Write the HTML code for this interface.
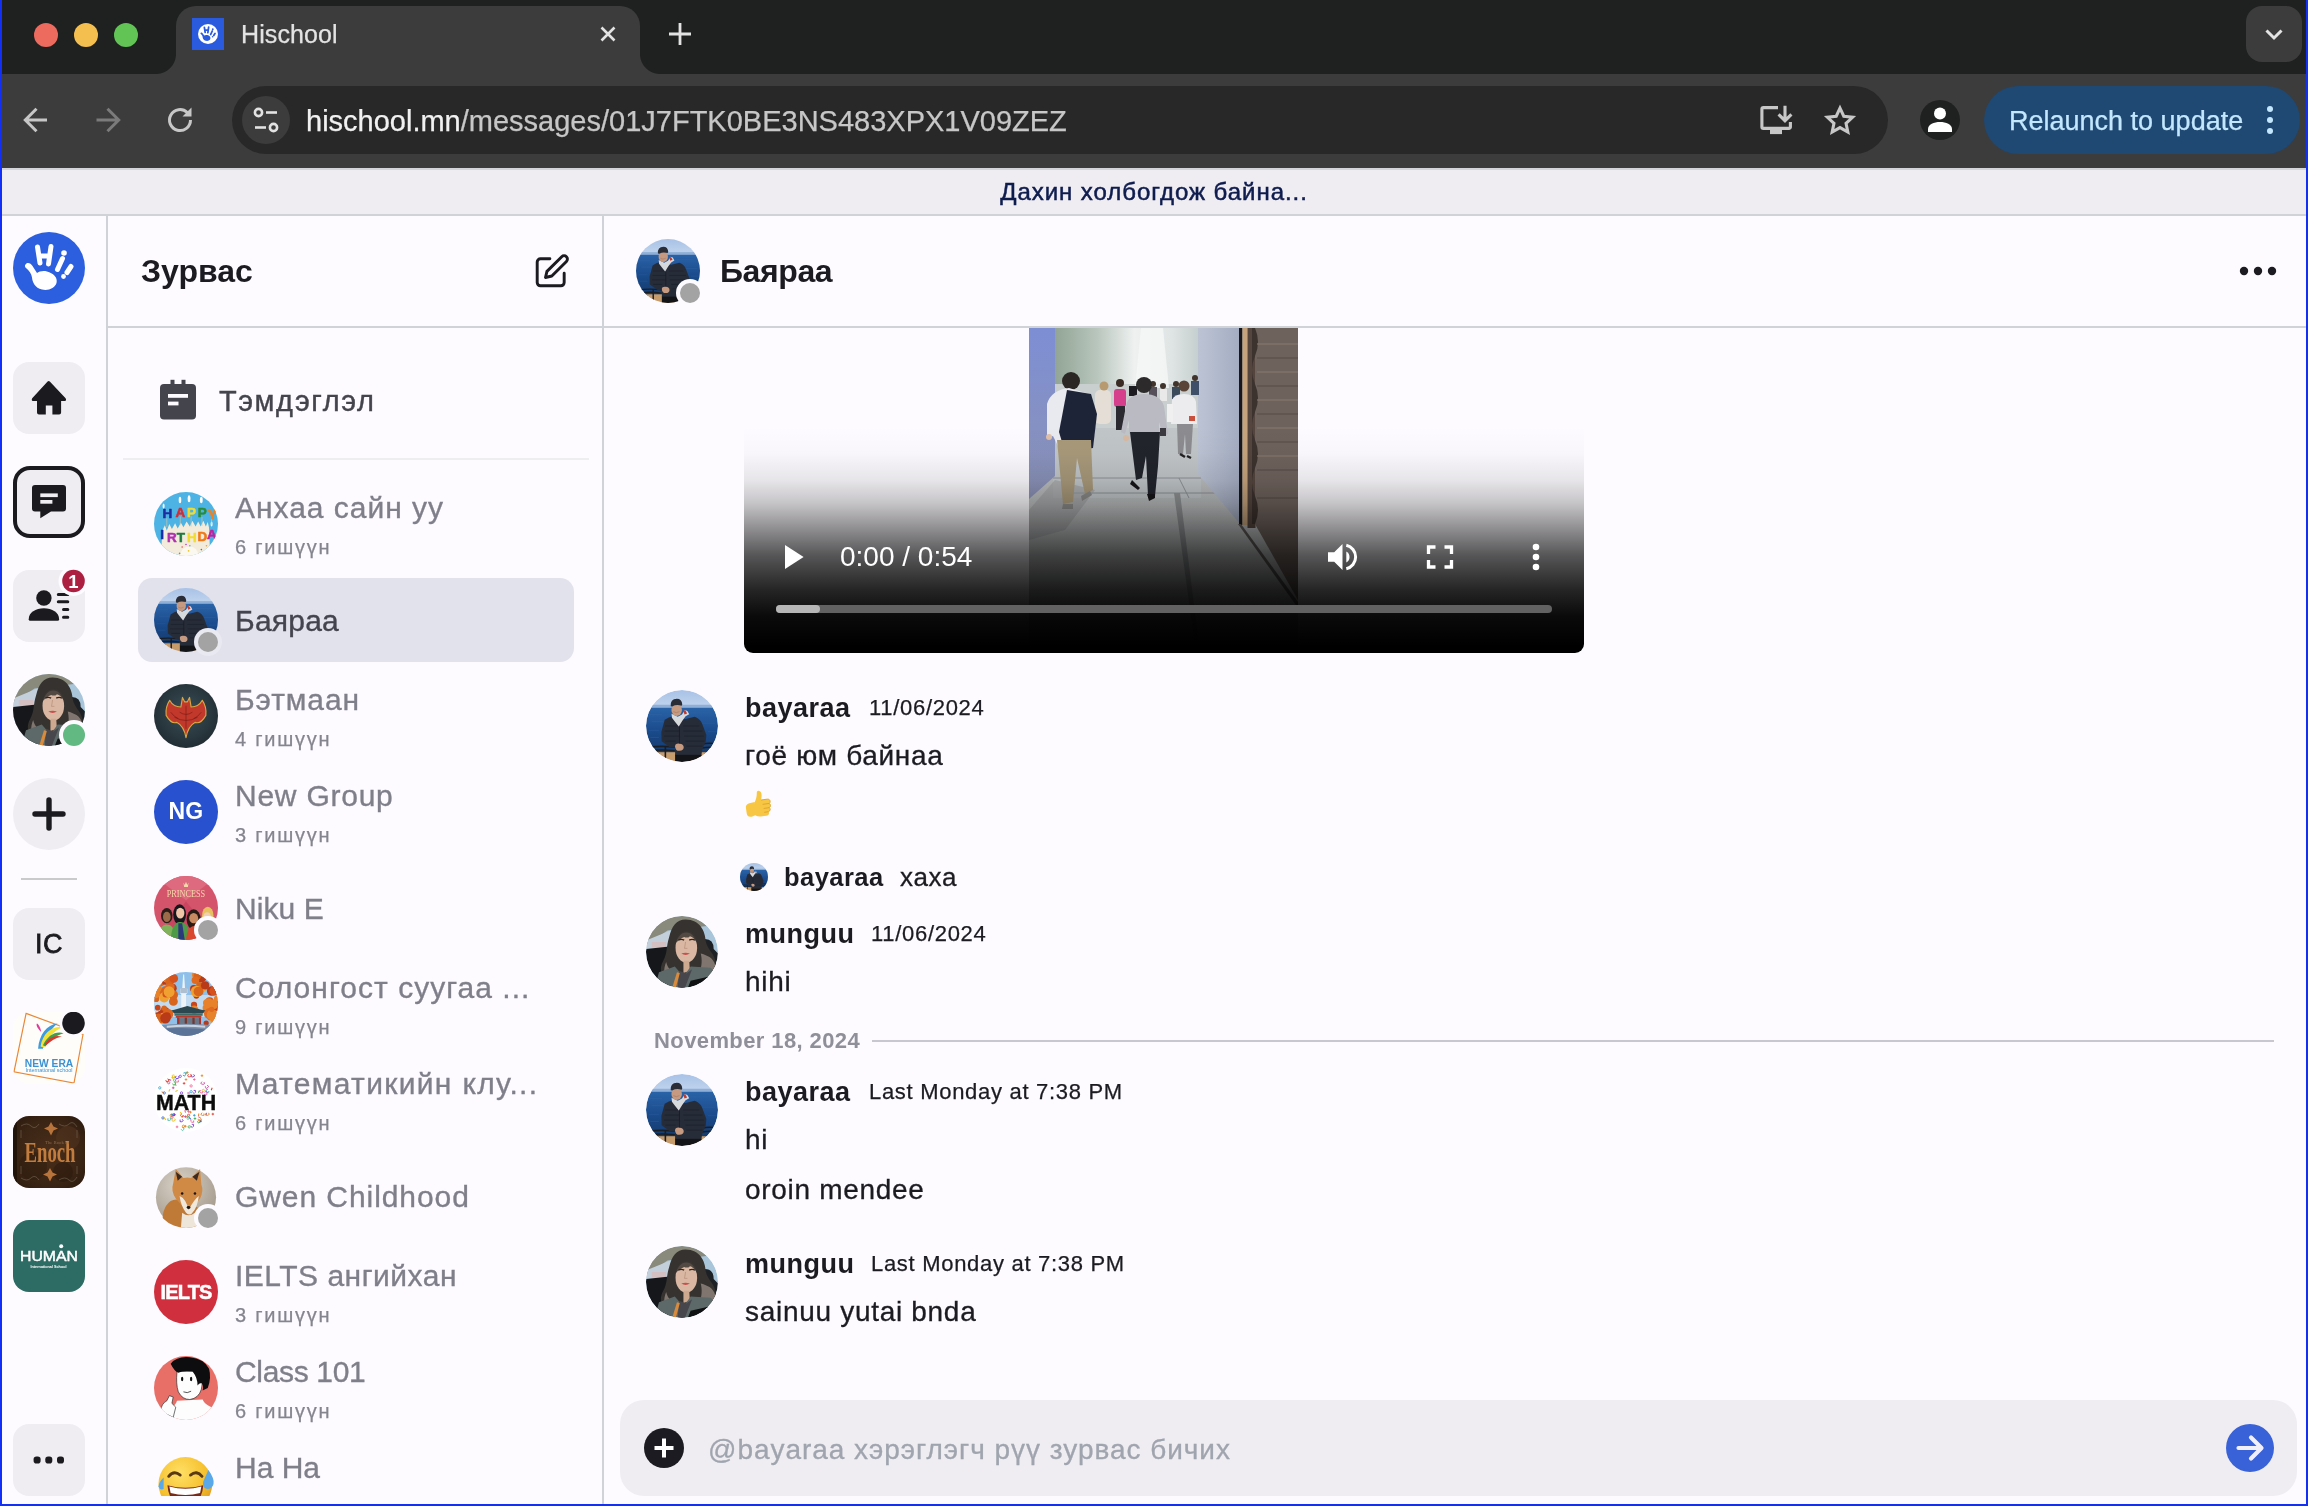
<!DOCTYPE html>
<html lang="mn">
<head>
<meta charset="utf-8">
<title>Hischool</title>
<style>
*{box-sizing:border-box;margin:0;padding:0}
html,body{width:2308px;height:1506px;overflow:hidden;background:#fdfbff}
body{will-change:transform;position:relative;font-family:"Liberation Sans",sans-serif;color:#1b1b21;-webkit-font-smoothing:antialiased}
.abs{position:absolute}
.t{position:absolute;white-space:nowrap;line-height:1}
/* window frame */
#frameL{left:0;top:0;width:2px;height:1506px;background:#1230f5;z-index:50}
#frameR{left:2306px;top:0;width:2px;height:1506px;background:#1230f5;z-index:50}
#frameB{left:0;top:1504px;width:2308px;height:2px;background:#1230f5;z-index:50}
/* browser chrome */
#tabstrip{left:0;top:0;width:2308px;height:74px;background:#1f2020}
#toolbar{left:0;top:74px;width:2308px;height:94px;background:#3c3c3c}
#tab{left:176px;top:6px;width:464px;height:68px;background:#3c3c3c;border-radius:20px 20px 0 0}
#tab:before,#tab:after{content:"";position:absolute;bottom:0;width:20px;height:20px}
#tab:before{left:-20px;background:radial-gradient(circle at 0 0,transparent 19.5px,#3c3c3c 20.5px)}
#tab:after{right:-20px;background:radial-gradient(circle at 100% 0,transparent 19.5px,#3c3c3c 20.5px)}
.tl{width:24px;height:24px;border-radius:50%;top:23px}
#omni{left:232px;top:86px;width:1656px;height:68px;border-radius:34px;background:#282828}
#siteinfo{left:242px;top:96px;width:48px;height:48px;border-radius:50%;background:#3c3c3c}
#relaunch{left:1984px;top:86px;width:316px;height:68px;border-radius:34px;background:#1f4872}
#tabsearch{left:2246px;top:6px;width:56px;height:56px;border-radius:16px;background:#3c3c3c}
#profile{left:1920px;top:100px;width:40px;height:40px;border-radius:50%;background:#1f2020}
/* app */
#line1{left:0;top:168px;width:2308px;height:2px;background:#d2d5da}
#banner{left:0;top:170px;width:2308px;height:44px;background:#efedf2}
#line2{left:0;top:214px;width:2308px;height:2px;background:#cfd3d8}
#vline1{left:106px;top:216px;width:2px;height:1290px;background:#cfd3d8}
#vline2{left:602px;top:216px;width:2px;height:1290px;background:#cfd3d8}
#hline{left:108px;top:326px;width:2200px;height:2px;background:#cfd3d8}
.rail{left:13px;width:72px;height:72px;border-radius:16px;background:#efedf2}
.circle{border-radius:50%}
.av{width:64px;height:64px;border-radius:50%;overflow:hidden;left:154px}
.nm{left:235px;font-size:30px;color:#7f7f8a;-webkit-text-stroke:.35px}
.sub{left:235px;font-size:20px;letter-spacing:1.750px;color:#85858f;-webkit-text-stroke:.25px}
.dot{width:28px;height:28px;border-radius:50%;background:#fdfbff}
.dot:after{content:"";position:absolute;left:4px;top:4px;width:20px;height:20px;border-radius:50%;background:#a3a3a3}
.mav{left:646px;width:72px;height:72px;border-radius:50%;overflow:hidden}
.un{left:745px;font-size:27px;font-weight:bold;color:#1b1b21;letter-spacing:.5px}
.ts{font-size:22px;color:#1b1b21;letter-spacing:.7px;-webkit-text-stroke:.25px}
.msg{left:745px;font-size:28px;color:#1b1b21;letter-spacing:.7px;-webkit-text-stroke:.3px}
</style>
</head>
<body>
<!-- BROWSER CHROME -->
<div id="tabstrip" class="abs"></div>
<div id="toolbar" class="abs"></div>
<div id="tab" class="abs"></div>
<div class="abs tl" style="left:34px;background:#ed6a5f"></div>
<div class="abs tl" style="left:74px;background:#f5bf4f"></div>
<div class="abs tl" style="left:114px;background:#61c455"></div>
<div id="omni" class="abs"></div>
<div id="siteinfo" class="abs"></div>
<div id="relaunch" class="abs"></div>
<div id="tabsearch" class="abs"></div>
<div id="profile" class="abs"></div>
<svg class="abs" style="left:0;top:0" width="2308" height="168" viewBox="0 0 2308 168" fill="none">
<!-- favicon -->
<rect x="192" y="18" width="32" height="32" fill="#2a5bdf"/>
<circle cx="208" cy="34" r="10" fill="#fff"/>
<g transform="translate(196.600 22.600) scale(.317)" fill="#2a5bdf"><path d="M12.500 32.500c2-2.500 5-1.500 7 1.500l4.500 7c2-1.500 6-2.500 10-1.500 6 1.500 11 6 9.500 11.500-1.500 5-8 8-14.500 6.500-7-1.500-9.500-7-10-12-0.500-4-3-7-6-9.500-1.200-1-1.400-2.400-0.500-3.500z"/>
<g stroke="#2a5bdf" stroke-width="5.600" stroke-linecap="round" fill="none"><path d="M24.500 15l2.500 16M38 14.500l-2.500 17.500M26 24h10.500M49.500 26.500l-5 11M58 34.500l-4 6"/></g><circle cx="51" cy="21" r="3"/><circle cx="50.500" cy="44.500" r="2.600"/></g>
<!-- tab close -->
<path d="M601.5 27.5l13 13M614.5 27.5l-13 13" stroke="#e3e3e3" stroke-width="2.6"/>
<!-- new tab plus -->
<path d="M669 34h22M680 23v22" stroke="#e3e3e3" stroke-width="2.8"/>
<!-- tab search chevron -->
<path d="M2266.500 30.500l7.500 7.500l7.500-7.500" stroke="#e3e3e3" stroke-width="3"/>
<!-- back -->
<path d="M47 120H26M36.500 108.800L25.300 120l11.200 11.200" stroke="#c7c7c7" stroke-width="3"/>
<!-- forward -->
<path d="M96.500 120h21M107.500 108.800L118.700 120l-11.200 11.200" stroke="#7b7b7b" stroke-width="3"/>
<!-- reload -->
<path d="M190.500 120a10.500 10.500 0 1 1-3.200-7.500" stroke="#c7c7c7" stroke-width="3"/>
<path d="M191.500 107.500v9h-9z" fill="#c7c7c7"/>
<!-- site info (tune) -->
<g stroke="#e3e3e3" stroke-width="2.6"><circle cx="258.500" cy="112.500" r="3.600"/><path d="M266 112.500h11"/><circle cx="273.500" cy="127.500" r="3.600"/><path d="M255 127.500h11"/></g>
<!-- install icon -->
<g stroke="#c7c7c7" stroke-width="3.100"><path d="M1778 107.600H1763.400a1.500 1.500 0 0 0-1.500 1.500V126.900a1.500 1.500 0 0 0 1.500 1.500H1788.900a1.500 1.500 0 0 0 1.500-1.500V122"/><path d="M1785 105.800V120M1778.600 114.300l6.400 6.400 6.400-6.400"/></g><rect x="1770" y="129.500" width="12" height="4.600" fill="#c7c7c7"/>
<!-- star -->
<path d="M1840 106.300l4.200 9 9.800 1.100-7.300 6.700 2 9.700-8.700-4.900-8.700 4.900 2-9.700-7.300-6.700 9.800-1.100z" stroke="#c7c7c7" stroke-width="3.400" stroke-linejoin="miter" transform="translate(1840 120.500) scale(.9) translate(-1840 -120)"/>
<!-- profile -->
<circle cx="1940" cy="113.500" r="6" fill="#fff"/><path d="M1928 132v-3c0-4.500 6-7 12-7s12 2.500 12 7v3z" fill="#fff"/>
<!-- kebab -->
<g fill="#c2e7ff"><circle cx="2270" cy="109" r="3"/><circle cx="2270" cy="120" r="3"/><circle cx="2270" cy="131" r="3"/></g>
</svg>
<div class="t" style="left:241px;top:22px;font-size:25px;letter-spacing:.1px;color:#e3e3e3;-webkit-text-stroke:.25px">Hischool</div>
<div class="t" style="left:306px;top:107px;font-size:29px;color:#c7c7c7;-webkit-text-stroke:.25px"><span style="color:#f1f1f1">hischool.mn</span>/messages/01J7FTK0BE3NS483XPX1V09ZEZ</div>
<div class="t" style="left:2009px;top:108px;font-size:27px;color:#c2e7ff;-webkit-text-stroke:.25px">Relaunch to update</div>


<!-- APP FRAME -->
<div id="line1" class="abs"></div>
<div id="banner" class="abs"></div>
<div id="line2" class="abs"></div>
<div class="t" style="left:0;width:2308px;text-align:center;top:180px;font-size:24px;letter-spacing:.96px;color:#0e1c4e;-webkit-text-stroke:.5px #0e1c4e">Дахин холбогдож байна...</div>
<div id="vline1" class="abs"></div>
<div id="vline2" class="abs"></div>
<div id="hline" class="abs"></div>
<svg width="0" height="0" style="position:absolute">
<defs>
<clipPath id="cc"><circle cx="50" cy="50" r="50"/></clipPath>
<linearGradient id="sea" x1="0" y1="0" x2="0" y2="1"><stop offset="0" stop-color="#2a63a8"/><stop offset=".5" stop-color="#1a4b8c"/><stop offset="1" stop-color="#143a6c"/></linearGradient>
<linearGradient id="sky" x1="0" y1="0" x2="0" y2="1"><stop offset="0" stop-color="#a8c2e6"/><stop offset="1" stop-color="#c3d6ee"/></linearGradient>
<symbol id="bay" viewBox="0 0 100 100"><g clip-path="url(#cc)">
<rect width="100" height="26" fill="url(#sky)"/><rect y="20.500" width="100" height="4.500" fill="#90afd6"/>
<rect y="24.700" width="100" height="64" fill="url(#sea)"/>
<g stroke="#3a6aa8" stroke-width=".8" opacity=".5"><path d="M2 34h20M60 32h30M8 44h16M70 46h26M4 56h14M86 58h12M6 66h12"/></g>
<rect y="86.400" width="100" height="14" fill="#c79c6c"/>
<path d="M4 79.500q18-2.500 36 0M4 84.500q18-2.500 36 0M78 75q10-2 22 0M78 80.500q10-2 22 0" stroke="#1a1e24" stroke-width="2.200" fill="none"/><rect x="25.800" y="79" width="2.200" height="18" fill="#1a1e24"/>
<path d="M26 41.300q6-4 11-5l18 4 12.700-3.300q8 3 10.300 10l5.800 15.500-.8 9-5.100 12.300-.9 7H40.400v-11l-6.800 0-11.900-8.600-.4-12.700z" fill="#272c39"/>
<path d="M35.500 33l.5 5.500 4.500 6 5 6.100 5-8 4.500-6 5-3-2.500-4.500-3.500-1.400-4 6.300-6 3z" fill="#d7dadd"/><path d="M52 29.500l2.500-1.800 2.600 4.800-3.600 1.500z" fill="#c4372b"/>
<ellipse cx="42.600" cy="27.800" rx="7.300" ry="8.200" fill="#c59a80"/><path d="M38 30q4 3 8.500 0" stroke="#a87860" stroke-width=".9" fill="none"/>
<path d="M34.300 22.500q-.8-10.500 8.500-10.500 7 0 7.600 8.200l-1 1.800q-7-2.500-13 1z" fill="#2b2d36"/>
<path d="M46.500 51v28" stroke="#161922" stroke-width="1"/><path d="M40.400 78q0-4 6-3.500 6 .5 6 5t-6 5q-6 0-6-6.500z" fill="#c59a80"/>
<rect x="40.400" y="90" width="36.600" height="11" fill="#121418"/>
<g stroke="#1a1e29" stroke-width="1.100" opacity=".8"><path d="M27 50h17M26 57h20M25 64h22M27 71h14M52 50h22M52 57h26M53 64h27M55 71h26M56 78h22"/></g>
</g></symbol>
<symbol id="mun" viewBox="0 0 100 100"><g clip-path="url(#cc)">
<rect width="100" height="100" fill="#a9c5d9"/><path d="M0 0h100v12L30 20 0 40z" fill="#8a8a7c"/><path d="M0 34l34-14v30L0 52z" fill="#c3d0dc"/><rect x="8" y="36" width="20" height="8" fill="#d8bcbc" opacity=".8"/>
<path d="M0 46l36-4v60H0z" fill="#15171a"/><path d="M82 32q12 0 12 14l6 6v20H80z" fill="#1d2024"/>
<path d="M55 5c20 0 27 16 28 30 2 12 14 18 14 32 0 12-12 14-26 12L30 86c-10-2-12-14-6-24 6-10 4-20 8-32C36 14 42 5 55 5z" fill="#35322f"/>
<path d="M76 52c8 2 18 6 20 16 0 10-10 12-22 10 4-8 4-18 2-26zM28 64c2 10 10 16 22 20l-18 4c-8-4-8-14-4-24z" fill="#80766f"/>
<ellipse cx="56" cy="44" rx="15" ry="21" fill="#d9b7a2"/><path d="M41 38c2-12 8-17 15-17s14 4 15 16c-4-6-8-9-10-9-3 3-6 2-8 1-4 2-8 4-12 9z" fill="#3b3633" opacity=".85"/><path d="M52 62l8 0 1 14-9 3z" fill="#cfa890"/>
<path d="M49 52q6-2 12 0-6 4-12 0z" fill="#c8504e"/><path d="M45 33.500q4-2 8 0M60 33.500q4-2 8 0" stroke="#2a2422" stroke-width="2" fill="none"/><path d="M55 36l-1.500 9h4" stroke="#b8907a" stroke-width="1" fill="none"/>
<path d="M12 100l6-22 22-8 12 14 10-14 28 2 12 12v20z" fill="#5d6969"/><path d="M46 76l10 4 8-6-10 26H44z" fill="#46464c"/><path d="M43 78l4 1-6 22h-5z" fill="#d98a3a"/>
<path d="M58 100l4-10 26-6-6 16z" fill="#0f1113"/>
</g></symbol>
</defs></svg>
<!-- logo -->
<svg class="abs" style="left:13px;top:232px" width="72" height="72" viewBox="0 0 72 72"><circle cx="36" cy="36" r="36" fill="#2b5fe0"/>
<g fill="#fff"><path d="M12.500 32.500c2-2.500 5-1.500 7 1.500l4.500 7c2-1.500 6-2.500 10-1.500 6 1.500 11 6 9.500 11.500-1.500 5-8 8-14.500 6.500-7-1.500-9.500-7-10-12-0.500-4-3-7-6-9.500-1.200-1-1.400-2.400-0.500-3.500z"/>
<g stroke="#fff" stroke-width="5" stroke-linecap="round" fill="none"><path d="M24.500 15l2.500 16M38 14.500l-2.500 17.500M26 24h10.500M49.500 26.500l-5 11M58 34.500l-4 6"/></g>
<circle cx="51" cy="21" r="2.800"/><circle cx="50.500" cy="44.500" r="2.400"/></g></svg>
<!-- home -->
<div class="abs rail" style="top:362px"></div>
<svg class="abs" style="left:13px;top:362px" width="72" height="72" viewBox="13 362 72 72"><path d="M47.600 381.600q1.100-1.100 2.200 0L65.600 398.200q1.400 2.800-1.400 2.800H61.100V412.600q0 2-2 2H52.400V405.400H45.800V414.600H39q-2 0-2-2V401H33.600q-2.800 0-1.400-2.800z" fill="#1b1b1f"/></svg>
<!-- chat (active) -->
<div class="abs rail" style="top:466px;border:4.500px solid #1b1b1f;border-radius:17px"></div>
<svg class="abs" style="left:13px;top:466px" width="72" height="72" viewBox="13 466 72 72"><path d="M35 485H63a3 3 0 0 1 3 3V508.600a3 3 0 0 1-3 3H51L40.300 518.300V511.600H35a3 3 0 0 1-3-3V488a3 3 0 0 1 3-3z" fill="#1b1b1f"/><rect x="40.300" y="493.400" width="17.500" height="3.700" fill="#efedf2"/><rect x="40.300" y="500" width="12.100" height="3.700" fill="#efedf2"/></svg>
<!-- contacts -->
<div class="abs rail" style="top:570px"></div>
<svg class="abs" style="left:13px;top:566px" width="76" height="76" viewBox="13 566 76 76"><circle cx="43.900" cy="598" r="7.700" fill="#1b1b1f"/><path d="M28.700 619.300c0-7 7-11 15.200-11s15.200 4 15.200 11a1.500 1.500 0 0 1-1.500 1.500H30.200a1.500 1.500 0 0 1-1.500-1.500z" fill="#1b1b1f"/>
<g stroke="#1b1b1f" stroke-width="3" stroke-linecap="round"><path d="M58.300 594.500h9.500M58.300 601.800h9.500M63.500 609.400h4.300M63.500 617.200h4.300"/></g>
<circle cx="73.500" cy="581" r="15" fill="#fdfbff"/><circle cx="73.500" cy="581" r="11.300" fill="#ad1f40"/>
<text x="73.500" y="587.600" text-anchor="middle" font-family="Liberation Sans, sans-serif" font-weight="bold" font-size="18.500" fill="#fff">1</text></svg>
<!-- me -->
<svg class="abs" style="left:13px;top:674px" width="72" height="72"><use href="#mun" width="72" height="72"/></svg>
<div class="abs circle" style="left:58.500px;top:719.500px;width:30px;height:30px;background:#fdfbff"></div>
<div class="abs circle" style="left:62.500px;top:723.500px;width:22.500px;height:22.500px;background:#62b982"></div>
<!-- plus -->
<div class="abs rail circle" style="top:778px"></div>
<svg class="abs" style="left:13px;top:778px" width="72" height="72" viewBox="0 0 72 72"><path d="M22 36h28M36 22v28" stroke="#1b1b1f" stroke-width="5.400" stroke-linecap="round"/></svg>
<div class="abs" style="left:21px;top:878px;width:56px;height:2px;background:#cacacd"></div>
<!-- IC -->
<div class="abs rail" style="top:908px"></div>
<div class="t" style="left:13px;width:72px;text-align:center;top:931px;font-size:27px;-webkit-text-stroke:.8px #1b1b1f;letter-spacing:.5px">IC</div>
<!-- New Era -->
<svg class="abs" style="left:13px;top:1012px" width="76" height="72" viewBox="13 1012 76 72"><rect x="13" y="1012" width="72" height="72" rx="16" fill="#fffdfa"/>
<clipPath id="nec"><rect x="13" y="1012" width="72" height="72" rx="16"/></clipPath><path clip-path="url(#nec)" d="M26.100 1013.400L83 1034.500 74 1083 14 1071.800z" fill="none" stroke="#e8883a" stroke-width="1.200"/>
<g transform="translate(-9.500 -214) scale(1.220 1.205)"><path d="M39 1048c1-12 7-20 16-21-6 5-10 12-12 21z" fill="#3d9be0"/><path d="M41 1046c2-11 9-17 18-16-7 3-12 9-15 17z" fill="#f2e23a"/><path d="M43 1045c4-8 10-12 17-10-7 2-11 6-15 11z" fill="#3f9f4a"/><path d="M44.500 1044c4-6 9-8 14-6-6 1-9 4-13 7z" fill="#d9382c"/><path d="M38 1027c1 0 3 3 3.500 7-2-2-4.500-5-3.500-7z" fill="#e03a9a"/></g>
<text x="49" y="1066.700" text-anchor="middle" font-family="Liberation Sans, sans-serif" font-weight="bold" font-size="10.200" fill="#3a92d2" textLength="48.500" lengthAdjust="spacingAndGlyphs">NEW ERA</text>
<text x="49" y="1072" text-anchor="middle" font-family="Liberation Sans, sans-serif" font-size="4.800" fill="#3a92d2" textLength="47" lengthAdjust="spacingAndGlyphs">International school</text>
<circle cx="73.500" cy="1023" r="14" fill="#fdfbff"/><circle cx="73.500" cy="1023" r="11.300" fill="#1b1b1f"/></svg>
<!-- Enoch -->
<svg class="abs" style="left:13px;top:1116px" width="72" height="72" viewBox="0 0 72 72"><defs><radialGradient id="lea" cx=".5" cy=".5" r=".75"><stop offset="0" stop-color="#4a2f1b"/><stop offset=".6" stop-color="#3a2414"/><stop offset="1" stop-color="#27170c"/></radialGradient></defs>
<clipPath id="enc"><rect width="72" height="72" rx="16"/></clipPath><rect width="72" height="72" rx="16" fill="url(#lea)"/><g clip-path="url(#enc)"><rect x="0" y="0" width="4" height="72" fill="#23140a"/><circle cx="20" cy="50" r="14" fill="#2e1b0e" opacity=".5"/><circle cx="55" cy="22" r="12" fill="#573721" opacity=".45"/><circle cx="50" cy="56" r="10" fill="#2a180c" opacity=".5"/></g>
<g fill="none" stroke="#7a6a58" stroke-width=".8" opacity=".7"><path d="M8 10q6-4 10 0t8-2M46 8q6 4 10 0t8 3M8 62q6 4 10 0t8 2M46 64q6-4 10 0t8-3M8 14v8M64 14v8M8 50v8M64 50v8"/></g>
<g fill="#b8743a"><path d="M38 6l2.500 4.500 4.500 2-4.500 2-2.500 5-2.500-5-4.500-2 4.500-2zM37 52l2.500 4.500 4.500 2-4.500 2-2.500 5-2.500-5-4.500-2 4.500-2z"/></g>
<text x="37" y="46" text-anchor="middle" font-family="Liberation Serif, serif" font-weight="bold" font-size="30" fill="#c27d3e" textLength="51" lengthAdjust="spacingAndGlyphs">Enoch</text><text x="44" y="27.500" text-anchor="middle" font-family="Liberation Serif, serif" font-size="5" fill="#8a6a4a" textLength="24" lengthAdjust="spacingAndGlyphs">The Book of</text></svg>
<!-- Human -->
<svg class="abs" style="left:13px;top:1220px" width="72" height="72" viewBox="13 1220 72 72"><rect x="13" y="1220" width="72" height="72" rx="16" fill="#2d6b65"/>
<text x="49" y="1261.300" text-anchor="middle" font-family="Liberation Sans, sans-serif" font-size="15.400" fill="#fff" stroke="#fff" stroke-width=".5" textLength="58" lengthAdjust="spacingAndGlyphs">HUMAN</text><circle cx="61.200" cy="1246.200" r="2" fill="#fff"/>
<text x="48.500" y="1268.200" text-anchor="middle" font-family="Liberation Sans, sans-serif" font-weight="bold" font-size="4.200" fill="#fff" textLength="36" lengthAdjust="spacingAndGlyphs">International School</text></svg>
<!-- more -->
<div class="abs rail" style="top:1424px"></div>
<svg class="abs" style="left:13px;top:1424px" width="72" height="72" viewBox="0 0 72 72"><g fill="#1b1b1f"><rect x="20.600" y="32.500" width="7" height="7" rx="2.800"/><rect x="32.300" y="32.500" width="7" height="7" rx="2.800"/><rect x="44" y="32.500" width="7" height="7" rx="2.800"/></g></svg>


<div class="t" style="left:141px;top:255px;font-size:32px;font-weight:bold;color:#1b1b21">Зурвас</div>
<svg class="abs" style="left:532px;top:252px" width="39" height="39" viewBox="0 0 24 24" fill="none" stroke="#1b1b21" stroke-width="1.800" stroke-linecap="round" stroke-linejoin="round"><path d="M11 4.200H5.200a2 2 0 0 0-2 2V18.800a2 2 0 0 0 2 2H17.800a2 2 0 0 0 2-2V13"/><path d="M18.300 2.900a2 2 0 0 1 2.900 2.900L12.200 14.800 8.300 15.700 9.200 11.900z"/></svg>
<!-- notes -->
<svg class="abs" style="left:158px;top:378px" width="40" height="44" viewBox="158 378 40 44"><rect x="160" y="384" width="36" height="35.600" rx="4" fill="#44444d"/><rect x="170.500" y="379.800" width="4" height="7" fill="#44444d"/><rect x="181.500" y="379.800" width="4" height="7" fill="#44444d"/><rect x="168" y="394" width="20" height="3.800" fill="#fdfbff"/><rect x="168" y="401.600" width="10.500" height="3.800" fill="#fdfbff"/></svg>
<div class="t" style="left:219px;top:387px;font-size:29px;letter-spacing:1.550px;color:#44444d;-webkit-text-stroke:.4px">Тэмдэглэл</div>
<div class="abs" style="left:123px;top:458px;width:466px;height:2px;background:#eeeef1"></div>
<div class="abs" style="left:138px;top:578px;width:436px;height:84px;border-radius:14px;background:#e2e2ec"></div>
<svg class="abs" style="left:154px;top:492px" width="64" height="64" viewBox="0 0 100 100"><g clip-path="url(#cc)"><rect width="100" height="100" fill="#4db3e4"/>
<path d="M11 100l2-40 4-8 3 8 4-10 4 8 5-9 4 8 5-9 4 7 5-9 5 8 4-9 5 9 4-8 4 8 4-9 4 9 3-7 2 9 2 49z" fill="#f3ecdc"/><path d="M40 100q2-14 16-15 12 1 14 15z" fill="#fbf8f0"/>
<g fill="#fff"><ellipse cx="40.600" cy="12.500" rx="2" ry="5"/><ellipse cx="54.800" cy="10.500" rx="2.200" ry="5.500"/><ellipse cx="73.900" cy="12.500" rx="2.200" ry="5"/><ellipse cx="15" cy="22" rx="1.500" ry="4"/><ellipse cx="90" cy="50" rx="1.500" ry="4"/></g>
<g stroke="#d8c8a0" stroke-width="1"><path d="M20 41v14M41 38v14M58 38v16M75 39v14M90 41v10"/></g>
<g font-family="Liberation Sans, sans-serif" font-weight="bold" font-size="21" stroke-width=".9" stroke-linejoin="round" text-anchor="middle"><text x="21" y="41" fill="#1e2da0" stroke="#1e2da0">H</text><text x="41" y="38.500" fill="#d92a2f" stroke="#d92a2f">A</text><text x="58.500" y="38.500" fill="#f2dc30" stroke="#f2dc30">P</text><text x="75.500" y="39.500" fill="#2a8c3a" stroke="#2a8c3a">P</text><text x="91" y="41.500" fill="#f08020" stroke="#f08020">Y</text>
<text x="12.500" y="73.500" fill="#1a2aa8" stroke="#1a2aa8">I</text><text x="28" y="77.500" fill="#b030b0" stroke="#b030b0">R</text><text x="42" y="78.500" fill="#1e7a40" stroke="#1e7a40">T</text><text x="59" y="78.500" fill="#f2dc30" stroke="#f2dc30">H</text><text x="75.500" y="76.500" fill="#f07818" stroke="#f07818">D</text><text x="90.500" y="73.500" fill="#c020a0" stroke="#c020a0">A</text></g>
<g><circle cx="44" cy="86" r="1.300" fill="#e8555a"/><circle cx="50" cy="82" r="1.300" fill="#b040c0"/><circle cx="56" cy="84" r="1.300" fill="#4ab0e0"/><circle cx="54" cy="92" r="1.300" fill="#f0c020"/><circle cx="74" cy="90" r="1.300" fill="#4a70e0"/><circle cx="82" cy="84" r="1.300" fill="#f0a020"/><circle cx="40" cy="96" r="1.300" fill="#50b050"/></g></g></svg>
<div class="t nm" style="top:493px;letter-spacing:0.98px;color:#7f7f8a">Анхаа сайн уу</div>
<div class="t sub" style="top:537px">6 гишүүн</div>
<svg class="abs" style="left:154px;top:588px" width="64" height="64"><use href="#bay" width="64" height="64"/></svg><div class="abs dot" style="left:194px;top:628px;background:#e9e9f1"></div>
<div class="t nm" style="top:606px;letter-spacing:0.22px;color:#44444f">Баяраа</div>
<svg class="abs" style="left:154px;top:684px" width="64" height="64" viewBox="0 0 100 100"><defs><radialGradient id="btm" cx=".5" cy=".45" r=".6"><stop offset="0" stop-color="#3c5059"/><stop offset="1" stop-color="#1f2a30"/></radialGradient></defs><circle cx="50" cy="50" r="50" fill="url(#btm)"/>
<path d="M50 84C48 72 44 64 36 60C30 62 24 58 19 49C18 40 20 32 24.500 25.500C28 32 34 36 42 36L44.500 21L48 28L52 28L55.500 21L58 36C66 36 72 32 75.500 25.500C80 32 82 40 81 49C76 58 70 62 64 60C56 64 52 72 50 84Z" fill="#c2382b" stroke="#d6a545" stroke-width="1.800" stroke-linejoin="round"/><path d="M50 34v36M40 44q10 7 20 0M32 52q18 10 36 0M26 44q6 8 12 10M74 44q-6 8-12 10" stroke="#7e1c18" stroke-width="1.100" fill="none"/></svg>
<div class="t nm" style="top:685px;letter-spacing:0.91px;color:#7f7f8a">Бэтмаан</div>
<div class="t sub" style="top:729px">4 гишүүн</div>
<div class="abs circle" style="left:154px;top:780px;width:64px;height:64px;background:#2851d0"></div><div class="t" style="left:154px;width:64px;text-align:center;top:800px;font-size:23px;font-weight:bold;color:#fff;letter-spacing:.3px">NG</div>
<div class="t nm" style="top:781px;letter-spacing:0.76px;color:#7f7f8a">New Group</div>
<div class="t sub" style="top:825px">3 гишүүн</div>
<svg class="abs" style="left:154px;top:876px" width="64" height="64" viewBox="0 0 100 100"><g clip-path="url(#cc)"><rect width="100" height="100" fill="#d4546c"/><path d="M0 0L50 38 100 0z" fill="#dd6a7e"/><path d="M0 100L50 40 100 100z" fill="#c94560"/>
<text x="50" y="33" text-anchor="middle" font-family="Liberation Serif, serif" font-size="15" fill="#f3d9a8" textLength="60" lengthAdjust="spacingAndGlyphs">PRINCESS</text><path d="M46 10l2 4 2-5 2 5 2-4-1 7h-6z" fill="#f3d9a8"/>
<ellipse cx="20" cy="62" rx="9" ry="12" fill="#2a1c18"/><ellipse cx="20" cy="64" rx="6" ry="8" fill="#9c6a48"/><path d="M6 100q2-26 16-24 10 0 12 24z" fill="#7fb25a"/>
<ellipse cx="40" cy="60" rx="10" ry="16" fill="#16161c"/><ellipse cx="41" cy="58" rx="6.500" ry="8.500" fill="#efc7a8"/><path d="M26 100q2-30 16-28 14 2 14 28z" fill="#4f9a47"/><path d="M38 74l6 0 4 26h-10z" fill="#2a3a7a"/>
<ellipse cx="62" cy="68" rx="11" ry="16" fill="#2a1a14"/><ellipse cx="62" cy="66" rx="7" ry="8" fill="#c98a62"/><path d="M50 100q2-22 13-22t13 22z" fill="#d9482e"/>
<ellipse cx="84" cy="62" rx="9" ry="14" fill="#e8c060"/><ellipse cx="83" cy="64" rx="6" ry="7.500" fill="#f1cfb0"/><path d="M72 100q2-24 12-24t14 24z" fill="#b07ac0"/></g></svg><div class="abs dot" style="left:194px;top:916px"></div>
<div class="t nm" style="top:894px;letter-spacing:0.06px;color:#7f7f8a">Niku E</div>
<svg class="abs" style="left:154px;top:972px" width="64" height="64" viewBox="0 0 100 100"><g clip-path="url(#cc)"><rect width="100" height="100" fill="#8ec0ea"/><rect y="36" width="100" height="34" fill="#c2dbf0"/>
<path d="M45.500 4h1.600l1.400 22h3.500v7l-2 2v26h-7.400V35l-2-2v-7h3.500z" fill="#eef3f8"/><rect x="41" y="25" width="10.500" height="8" fill="#aebfd2"/>
<circle cx="10.4" cy="14.8" r="7.3" fill="#d9641c"/><circle cx="26.3" cy="11.1" r="6.9" fill="#b83a18"/><circle cx="6.9" cy="10.6" r="6.1" fill="#e8822a"/><circle cx="2.9" cy="32.6" r="8.1" fill="#d9641c"/><circle cx="30.3" cy="46.0" r="6.9" fill="#d9641c"/><circle cx="18.5" cy="30.8" r="8.9" fill="#d9641c"/><circle cx="17.8" cy="13.7" r="6.1" fill="#b83a18"/><circle cx="3.8" cy="25.1" r="8.1" fill="#e8822a"/><circle cx="3.3" cy="42.1" r="4.9" fill="#d9641c"/><circle cx="17.5" cy="9.1" r="4.3" fill="#e8822a"/><circle cx="15.9" cy="39.6" r="7.9" fill="#f0a030"/><circle cx="18.7" cy="34.5" r="5.5" fill="#d6521c"/><circle cx="5.8" cy="55.7" r="4.4" fill="#c8441a"/><circle cx="16.8" cy="61.9" r="7.6" fill="#c8441a"/><circle cx="19.5" cy="9.8" r="6.6" fill="#e8822a"/><circle cx="24.2" cy="14.9" r="6.4" fill="#d9641c"/><circle cx="30.8" cy="10.0" r="6.8" fill="#d6521c"/><circle cx="28.0" cy="25.4" r="7.5" fill="#b83a18"/><circle cx="15.9" cy="56.8" r="4.3" fill="#d9641c"/><circle cx="30.2" cy="35.8" r="7.3" fill="#d9641c"/><circle cx="23.4" cy="25.1" r="6.9" fill="#e06a20"/><circle cx="26.3" cy="23.5" r="5.9" fill="#e06a20"/><circle cx="11.1" cy="66.1" r="5.8" fill="#b83a18"/><circle cx="3.7" cy="8.8" r="7.8" fill="#e8822a"/><circle cx="23.6" cy="30.9" r="8.6" fill="#f0a030"/><circle cx="2.6" cy="34.2" r="6.7" fill="#e8822a"/><circle cx="93.1" cy="53.6" r="5.4" fill="#f0a030"/><circle cx="99.5" cy="42.3" r="5.9" fill="#e8822a"/><circle cx="67.7" cy="10.9" r="5.2" fill="#e8822a"/><circle cx="62.5" cy="51.5" r="4.9" fill="#c8441a"/><circle cx="62.2" cy="26.0" r="5.8" fill="#b83a18"/><circle cx="74.1" cy="7.8" r="8.3" fill="#b83a18"/><circle cx="86.9" cy="45.9" r="6.3" fill="#d6521c"/><circle cx="91.6" cy="54.2" r="8.0" fill="#f0a030"/><circle cx="77.1" cy="24.4" r="6.4" fill="#f0a030"/><circle cx="64.4" cy="4.2" r="5.0" fill="#e8822a"/><circle cx="66.2" cy="37.2" r="4.5" fill="#b83a18"/><circle cx="67.7" cy="6.3" r="5.8" fill="#d9641c"/><circle cx="64.7" cy="12.9" r="5.9" fill="#e06a20"/><circle cx="71.6" cy="21.5" r="5.8" fill="#d9641c"/><circle cx="66.4" cy="30.3" r="8.9" fill="#f0a030"/><circle cx="80.4" cy="5.3" r="4.5" fill="#c8441a"/><circle cx="90.1" cy="29.7" r="7.5" fill="#b83a18"/><circle cx="62.9" cy="59.0" r="6.6" fill="#e8822a"/><circle cx="88.2" cy="56.7" r="7.8" fill="#c8441a"/><circle cx="99.2" cy="53.5" r="7.5" fill="#c8441a"/><circle cx="81.7" cy="56.3" r="5.8" fill="#e8822a"/><circle cx="82.2" cy="48.3" r="5.6" fill="#e8822a"/><circle cx="85.3" cy="48.9" r="7.8" fill="#e8822a"/><circle cx="92.6" cy="50.7" r="7.7" fill="#e8822a"/><circle cx="69.6" cy="30.6" r="7.7" fill="#d9641c"/><circle cx="92.0" cy="29.3" r="5.0" fill="#b83a18"/><circle cx="98.3" cy="27.7" r="8.7" fill="#c8441a"/><circle cx="98.3" cy="22.6" r="5.1" fill="#e8822a"/><circle cx="79.9" cy="20.9" r="6.4" fill="#b83a18"/><circle cx="93.9" cy="29.7" r="7.3" fill="#d6521c"/>
<path d="M26 60l6-1 20-6 22 6 8 1-6 5H32z" fill="#2d4750"/><path d="M32 65h44v3.500H32z" fill="#3c6a66"/><path d="M34 68.500h40v3H34z" fill="#b8382c"/><path d="M36 71h3.500v14H36zM48 71h3.500v14H48zM60 71h3.500v14H60zM70 71h3.500v14H70z" fill="#a8342a"/><rect x="39" y="72" width="31" height="12" fill="#4a3a34" opacity=".55"/>
<circle cx="92.1" cy="75.9" r="4.6" fill="#f0a030"/><circle cx="95.2" cy="73.8" r="6.4" fill="#e8822a"/><circle cx="87.5" cy="70.9" r="4.4" fill="#e06a20"/><circle cx="86.7" cy="65.0" r="8.7" fill="#e06a20"/><circle cx="81.5" cy="79.8" r="4.1" fill="#b83a18"/><circle cx="97.9" cy="75.2" r="4.7" fill="#d6521c"/><circle cx="91.1" cy="66.9" r="8.7" fill="#e8822a"/><circle cx="90.1" cy="58.3" r="4.1" fill="#e06a20"/><circle cx="14.3" cy="72.5" r="8.7" fill="#f0a030"/><circle cx="21.7" cy="65.9" r="8.4" fill="#d9641c"/><circle cx="5.5" cy="67.9" r="5.2" fill="#b83a18"/><circle cx="7.2" cy="72.9" r="8.2" fill="#d9641c"/><circle cx="20.0" cy="69.1" r="6.3" fill="#b83a18"/><circle cx="17.9" cy="72.3" r="8.1" fill="#b83a18"/>
<path d="M0 84q50-6 100 0v20H0z" fill="#7d8fa8"/><path d="M0 90q50-6 100 2v10H0z" fill="#5c7398"/><path d="M20 84q30-3 60 0v3q-30-3-60 0z" fill="#c9d3e2"/></g></svg>
<div class="t nm" style="top:973px;letter-spacing:1.03px;color:#7f7f8a">Солонгост суугаа ...</div>
<div class="t sub" style="top:1017px">9 гишүүн</div>
<svg class="abs" style="left:154px;top:1068px" width="64" height="64" viewBox="0 0 100 100"><g clip-path="url(#cc)"><rect width="100" height="100" fill="#fff"/>
<path d="M62 79h4m-2-2v4" stroke="#3aa84a" stroke-width="1.300"/><path d="M46 74h4" stroke="#e0332b" stroke-width="1.600" transform="rotate(135 46 74)"/><path d="M76 36q2-4 4 0t-3 3" stroke="#f06090" stroke-width="1.300" fill="none" transform="rotate(132 76 36)"/><path d="M25 33h4" stroke="#e8c020" stroke-width="1.600" transform="rotate(117 25 33)"/><circle cx="55" cy="92" r="1.800" stroke="#3aa84a" stroke-width="1.200" fill="none"/><path d="M31 12h4" stroke="#e8c020" stroke-width="1.600" transform="rotate(54 31 12)"/><circle cx="41" cy="13" r="1.800" stroke="#7a3ad0" stroke-width="1.200" fill="none"/><path d="M12 37h4" stroke="#e88020" stroke-width="1.600" transform="rotate(34 12 37)"/><path d="M27 15h4m-2-2v4" stroke="#e8c020" stroke-width="1.300"/><path d="M45 24h4m-2-2v4" stroke="#e0332b" stroke-width="1.300"/><path d="M57 10q2-4 4 0t-3 3" stroke="#e0332b" stroke-width="1.300" fill="none" transform="rotate(113 57 10)"/><circle cx="28" cy="77" r="1.800" stroke="#d040a0" stroke-width="1.200" fill="none"/><circle cx="58" cy="28" r="1.800" stroke="#f06090" stroke-width="1.200" fill="none"/><path d="M61 18h4m-2-2v4" stroke="#f06090" stroke-width="1.300"/><path d="M62 35q2-4 4 0t-3 3" stroke="#7a3ad0" stroke-width="1.300" fill="none" transform="rotate(48 62 35)"/><path d="M55 69h4m-2-2v4" stroke="#e88020" stroke-width="1.300"/><circle cx="27" cy="74" r="1.800" stroke="#e88020" stroke-width="1.200" fill="none"/><path d="M31 22q2-4 4 0t-3 3" stroke="#3aa84a" stroke-width="1.300" fill="none" transform="rotate(58 31 22)"/><path d="M48 66h4" stroke="#f06090" stroke-width="1.600" transform="rotate(71 48 66)"/><path d="M73 12h4m-2-2v4" stroke="#e88020" stroke-width="1.300"/><circle cx="16" cy="39" r="1.800" stroke="#2a60d0" stroke-width="1.200" fill="none"/><path d="M37 35h4" stroke="#e8c020" stroke-width="1.600" transform="rotate(153 37 35)"/><path d="M71 35h4" stroke="#3aa84a" stroke-width="1.600" transform="rotate(115 71 35)"/><circle cx="54" cy="74" r="1.800" stroke="#e0332b" stroke-width="1.200" fill="none"/><path d="M50 7h4m-2-2v4" stroke="#e88020" stroke-width="1.300"/><path d="M34 92h4m-2-2v4" stroke="#f06090" stroke-width="1.300"/><path d="M33 14q2-4 4 0t-3 3" stroke="#e8c020" stroke-width="1.300" fill="none" transform="rotate(178 33 14)"/><circle cx="14" cy="78" r="1.800" stroke="#2a60d0" stroke-width="1.200" fill="none"/><path d="M38 19q2-4 4 0t-3 3" stroke="#f06090" stroke-width="1.300" fill="none" transform="rotate(132 38 19)"/><path d="M86 36q2-4 4 0t-3 3" stroke="#2aa0d0" stroke-width="1.300" fill="none" transform="rotate(162 86 36)"/><path d="M44 80q2-4 4 0t-3 3" stroke="#7a3ad0" stroke-width="1.300" fill="none" transform="rotate(98 44 80)"/><path d="M23 18h4" stroke="#d040a0" stroke-width="1.600" transform="rotate(16 23 18)"/><path d="M91 31h4" stroke="#e0332b" stroke-width="1.600" transform="rotate(115 91 31)"/><path d="M47 91h4m-2-2v4" stroke="#e88020" stroke-width="1.300"/><path d="M52 68h4m-2-2v4" stroke="#f06090" stroke-width="1.300"/><path d="M32 79q2-4 4 0t-3 3" stroke="#e8c020" stroke-width="1.300" fill="none" transform="rotate(103 32 79)"/><path d="M46 8q2-4 4 0t-3 3" stroke="#2aa0d0" stroke-width="1.300" fill="none" transform="rotate(36 46 8)"/><path d="M38 13q2-4 4 0t-3 3" stroke="#7a3ad0" stroke-width="1.300" fill="none" transform="rotate(121 38 13)"/><path d="M28 72h4" stroke="#2a60d0" stroke-width="1.600" transform="rotate(45 28 72)"/><path d="M25 78q2-4 4 0t-3 3" stroke="#50b8a0" stroke-width="1.300" fill="none" transform="rotate(100 25 78)"/><path d="M82 70h4" stroke="#7a3ad0" stroke-width="1.600" transform="rotate(105 82 70)"/><path d="M90 72h4m-2-2v4" stroke="#e0332b" stroke-width="1.300"/><path d="M79 38q2-4 4 0t-3 3" stroke="#d040a0" stroke-width="1.300" fill="none" transform="rotate(25 79 38)"/><path d="M70 81q2-4 4 0t-3 3" stroke="#3aa84a" stroke-width="1.300" fill="none" transform="rotate(62 70 81)"/><circle cx="77" cy="35" r="1.800" stroke="#e8c020" stroke-width="1.200" fill="none"/><path d="M55 77h4" stroke="#2a60d0" stroke-width="1.600" transform="rotate(55 55 77)"/><path d="M78 22q2-4 4 0t-3 3" stroke="#d040a0" stroke-width="1.300" fill="none" transform="rotate(120 78 22)"/><path d="M71 83h4m-2-2v4" stroke="#2a60d0" stroke-width="1.300"/><circle cx="31" cy="73" r="1.800" stroke="#e0332b" stroke-width="1.200" fill="none"/><circle cx="32" cy="19" r="1.800" stroke="#50b8a0" stroke-width="1.200" fill="none"/><circle cx="46" cy="91" r="1.800" stroke="#e88020" stroke-width="1.200" fill="none"/><path d="M48 18h4m-2-2v4" stroke="#e88020" stroke-width="1.300"/><path d="M33 24h4" stroke="#f06090" stroke-width="1.600" transform="rotate(66 33 24)"/><path d="M16 78h4" stroke="#e8c020" stroke-width="1.600" transform="rotate(49 16 78)"/><path d="M30 73h4m-2-2v4" stroke="#7a3ad0" stroke-width="1.300"/><path d="M70 71h4" stroke="#e88020" stroke-width="1.600" transform="rotate(96 70 71)"/><path d="M62 82q2-4 4 0t-3 3" stroke="#f06090" stroke-width="1.300" fill="none" transform="rotate(137 62 82)"/><path d="M83 27q2-4 4 0t-3 3" stroke="#d040a0" stroke-width="1.300" fill="none" transform="rotate(80 83 27)"/><path d="M59 88q2-4 4 0t-3 3" stroke="#7a3ad0" stroke-width="1.300" fill="none" transform="rotate(49 59 88)"/><path d="M26 73h4m-2-2v4" stroke="#2aa0d0" stroke-width="1.300"/><path d="M44 93q2-4 4 0t-3 3" stroke="#50b8a0" stroke-width="1.300" fill="none" transform="rotate(51 44 93)"/><path d="M41 69h4" stroke="#e8c020" stroke-width="1.600" transform="rotate(51 41 69)"/><path d="M56 39h4" stroke="#d040a0" stroke-width="1.600" transform="rotate(180 56 39)"/><path d="M51 76q2-4 4 0t-3 3" stroke="#50b8a0" stroke-width="1.300" fill="none" transform="rotate(18 51 76)"/><path d="M48 8h4m-2-2v4" stroke="#50b8a0" stroke-width="1.300"/><path d="M21 17q2-4 4 0t-3 3" stroke="#e0332b" stroke-width="1.300" fill="none" transform="rotate(72 21 17)"/><path d="M47 76h4m-2-2v4" stroke="#d040a0" stroke-width="1.300"/><circle cx="43" cy="39" r="1.800" stroke="#7a3ad0" stroke-width="1.200" fill="none"/><path d="M62 10q2-4 4 0t-3 3" stroke="#7a3ad0" stroke-width="1.300" fill="none" transform="rotate(104 62 10)"/><path d="M46 74q2-4 4 0t-3 3" stroke="#e88020" stroke-width="1.300" fill="none" transform="rotate(154 46 74)"/><path d="M78 71q2-4 4 0t-3 3" stroke="#e88020" stroke-width="1.300" fill="none" transform="rotate(129 78 71)"/><circle cx="58" cy="37" r="1.800" stroke="#2aa0d0" stroke-width="1.200" fill="none"/><path d="M72 78q2-4 4 0t-3 3" stroke="#e88020" stroke-width="1.300" fill="none" transform="rotate(84 72 78)"/><path d="M85 70q2-4 4 0t-3 3" stroke="#e88020" stroke-width="1.300" fill="none" transform="rotate(103 85 70)"/><circle cx="23" cy="23" r="1.800" stroke="#d040a0" stroke-width="1.200" fill="none"/><circle cx="9" cy="31" r="1.800" stroke="#2aa0d0" stroke-width="1.200" fill="none"/><path d="M69 76h4" stroke="#f06090" stroke-width="1.600" transform="rotate(29 69 76)"/><path d="M61 74h4m-2-2v4" stroke="#2aa0d0" stroke-width="1.300"/><path d="M50 76h4" stroke="#e88020" stroke-width="1.600" transform="rotate(25 50 76)"/><path d="M28 31h4m-2-2v4" stroke="#d040a0" stroke-width="1.300"/>
<text x="50" y="65" text-anchor="middle" font-family="Liberation Sans, sans-serif" font-weight="bold" font-size="34" fill="#0c0c0c" stroke="#0c0c0c" stroke-width=".6" textLength="94" lengthAdjust="spacingAndGlyphs">MATH</text></g></svg>
<div class="t nm" style="top:1069px;letter-spacing:1.33px;color:#7f7f8a">Математикийн клу...</div>
<div class="t sub" style="top:1113px">6 гишүүн</div>
<svg class="abs" style="left:154px;top:1164px" width="64" height="64" viewBox="0 0 100 100"><defs><radialGradient id="fxb" cx=".4" cy=".3" r=".8"><stop offset="0" stop-color="#d9d2c8"/><stop offset="1" stop-color="#9e9485"/></radialGradient></defs><g clip-path="url(#cc)"><rect width="100" height="100" fill="#fdfbff"/><circle cx="50" cy="52" r="47" fill="url(#fxb)"/>
<path d="M14 100q-4-30 12-42 6-4 14-2l20 8q18 4 22 36z" fill="#c07a38"/><path d="M30 30l4-22 12 14q6-2 12 0l14-14 2 24q4 10-2 22l-12 16q-6 6-12 0L34 54q-8-12-4-24z" fill="#d08a46"/>
<path d="M34 12l3 14 7-6zM71 12l-4 14-7-6z" fill="#3a2a22"/><path d="M40 50q10 4 14 22 8-16 16-22-2 18-10 26-4 6-10 0-8-10-10-26z" fill="#f1e8dc"/><ellipse cx="54" cy="68" rx="3" ry="2.200" fill="#1a1412"/><circle cx="44" cy="46" r="2" fill="#1a1412"/><circle cx="64" cy="46" r="2" fill="#1a1412"/>
<path d="M44 76q10 8 20 0l2 24H42z" fill="#efe6da"/></g></svg><div class="abs dot" style="left:194px;top:1204px"></div>
<div class="t nm" style="top:1182px;letter-spacing:0.93px;color:#7f7f8a">Gwen Childhood</div>
<div class="abs circle" style="left:154px;top:1260px;width:64px;height:64px;background:#d0303e"></div><div class="t" style="left:154px;width:64px;text-align:center;top:1282px;font-size:20px;font-weight:bold;color:#fff;letter-spacing:-.8px;-webkit-text-stroke:.5px #fff">IELTS</div>
<div class="t nm" style="top:1261px;letter-spacing:0.49px;color:#7f7f8a">IELTS ангийхан</div>
<div class="t sub" style="top:1305px">3 гишүүн</div>
<svg class="abs" style="left:154px;top:1356px" width="64" height="64" viewBox="0 0 100 100"><g clip-path="url(#cc)"><rect width="100" height="100" fill="#e86f68"/>
<path d="M36 70q-2 8-14 14-10 6-12 16h92q-2-16-16-22-8-4-10-10z" fill="#fdfdfd"/><path d="M36 24q-2 20 2 32 6 12 18 12 14-2 18-16 4-14 0-28z" fill="#fdfdfd" stroke="#222" stroke-width="1"/>
<path d="M26 12q10-12 30-10 22 2 30 18 4 14-2 30l-8 4q2-8-2-12-4 0-6 4 0-12-8-22-14-2-22 2-6-2-12-14z" fill="#0d0d0f"/>
<ellipse cx="44" cy="36" rx="1.800" ry="3.600" fill="#111"/><ellipse cx="58" cy="36" rx="1.800" ry="3.600" fill="#111"/><path d="M46 56q6 3 12-1" stroke="#222" stroke-width="1.200" fill="none"/><path d="M10 86q2-12 10-16l4-8 6 2-2 10 6 6-4 16z" fill="#fdfdfd" stroke="#222" stroke-width="1"/></g></svg>
<div class="t nm" style="top:1357px;letter-spacing:-0.33px;color:#7f7f8a">Class 101</div>
<div class="t sub" style="top:1401px">6 гишүүн</div>
<svg class="abs" style="left:154px;top:1452px" width="64" height="44" viewBox="0 0 100 68.750"><defs><radialGradient id="emo" cx=".4" cy=".3" r=".8"><stop offset="0" stop-color="#ffe066"/><stop offset=".6" stop-color="#f6c02e"/><stop offset="1" stop-color="#d9901a"/></radialGradient></defs>
<g transform="translate(1,-6)"><circle cx="48" cy="56" r="42" fill="url(#emo)"/><path d="M22 44q8-10 18-2M56 42q10-8 18 2" stroke="#5a3a12" stroke-width="4.500" fill="none" stroke-linecap="round"/><path d="M20 58q28 8 56 0-2 30-28 32-26-2-28-32z" fill="#7a2a18"/><path d="M23 60q25 7 50 0l-2 10q-23 6-46 0z" fill="#fff"/>
<path d="M84 34q10 14 8 22-2 8-10 8-8-2-6-12z" fill="#5aa8e8"/><path d="M14 46q-8 8-8 14 2 6 8 4z" fill="#5aa8e8"/></g></svg>
<div class="t nm" style="top:1453px;letter-spacing:0px;color:#7f7f8a">Ha Ha</div>


<!-- header -->
<svg class="abs" style="left:636px;top:239px" width="64" height="64"><use href="#bay" width="64" height="64"/></svg>
<div class="abs dot" style="left:676px;top:279px"></div>
<div class="t" style="left:720px;top:255px;font-size:32px;font-weight:bold;color:#1b1b21;letter-spacing:-.4px">Баяраа</div>
<svg class="abs" style="left:2236px;top:263px" width="44" height="16"><g fill="#1b1b21"><circle cx="8" cy="8" r="4.200"/><circle cx="22" cy="8" r="4.200"/><circle cx="36" cy="8" r="4.200"/></g></svg>
<div class="abs" style="left:744px;top:328px;width:840px;height:325px;border-radius:0 0 9px 9px;overflow:hidden">
<svg class="abs" style="left:285px;top:0" width="269" height="325" viewBox="0 0 269 325">
<defs><linearGradient id="fog" x1="0" y1="0" x2="1" y2="0"><stop offset="0" stop-color="#8fa393"/><stop offset=".3" stop-color="#b9c6bd"/><stop offset=".55" stop-color="#eef1f0"/><stop offset=".8" stop-color="#dfe5e4"/><stop offset="1" stop-color="#c3cdcd"/></linearGradient>
<linearGradient id="flr" x1="0" y1="0" x2="0" y2="1"><stop offset="0" stop-color="#c2c5c6"/><stop offset="1" stop-color="#b2b4b5"/></linearGradient>
<linearGradient id="bw" x1="0" y1="0" x2="0" y2="1"><stop offset="0" stop-color="#7d8ed4"/><stop offset="1" stop-color="#8c93b6"/></linearGradient>
<linearGradient id="rw" x1="0" y1="0" x2="1" y2="0"><stop offset="0" stop-color="#bcc4d4"/><stop offset="1" stop-color="#a4acc2"/></linearGradient></defs>
<rect width="269" height="325" fill="url(#flr)"/>
<rect x="24" width="148" height="70" fill="url(#fog)"/><rect x="24" y="56" width="148" height="50" fill="#c9cfcf"/><rect x="24" y="100" width="148" height="70" fill="#c0c5c8"/>
<path d="M112 0h22l6 60h-34z" fill="#f6f8f8" opacity=".8"/>
<path d="M24 150h148M40 165h150M150 150l10 20" stroke="#8e9296" stroke-width="1"/>
<path d="M0 182l26-30 40 10-30 40-36 10z" fill="#9c9fa0" opacity=".6"/><path d="M145 165l22 160h4l-20-160z" fill="#8f9294"/>
<path d="M0 0h26v148L0 171z" fill="url(#bw)"/>
<path d="M169 0h42v196l-42-50z" fill="url(#rw)"/>
<!-- crowd -->
<g><rect x="66" y="62" width="16" height="34" rx="5" fill="#e4ded6"/><circle cx="75" cy="58" r="4.500" fill="#b89a70"/>
<rect x="85" y="61" width="12" height="18" rx="3" fill="#d63f8c"/><rect x="87" y="78" width="9" height="24" fill="#2a2a30"/><circle cx="91" cy="55" r="4" fill="#3a2c24"/>
<rect x="100" y="58" width="8" height="10" fill="#1c1c20"/><circle cx="124" cy="56" r="3" fill="#40342c"/><circle cx="134" cy="58" r="3" fill="#40342c"/><circle cx="147" cy="56" r="3" fill="#40342c"/><rect x="120" y="59" width="8" height="14" fill="#55505a"/><rect x="131" y="61" width="7" height="12" fill="#e9e9e9"/><rect x="143" y="59" width="8" height="12" fill="#3a4a5a"/><circle cx="166" cy="50" r="3" fill="#40342c"/><rect x="162" y="53" width="8" height="14" fill="#3f4f6a"/>
<path d="M143 72q2-6 12-6t12 8l1 22h-26z" fill="#ececee"/><circle cx="155" cy="58" r="5.500" fill="#5a4438"/><path d="M148 96h16l-2 30h-5l-1-20-2 20h-5z" fill="#8c8c90"/><rect x="160" y="88" width="6" height="5" fill="#c8503c"/><path d="M151 126l5 3M158 128l4 2" stroke="#222" stroke-width="2.500"/>
<rect x="138" y="76" width="6" height="18" fill="#f0f0f0"/></g>
<!-- man centre -->
<circle cx="115" cy="57" r="8" fill="#2c2a2a"/><path d="M97 78q2-12 18-12t20 12l4 28-5 2-4-14v12h-30V92l-4 14-4-2z" fill="#b9bac2"/><path d="M101 104h30l-2 34-3 30h-7l-2-40-4 22-6 2z" fill="#22242c"/><path d="M103 152l8 8-2 2-8-6zM118 166h8v4l-6 3z" fill="#16161a"/><circle cx="97" cy="110" r="3" fill="#d8b8a0"/><rect x="131" y="100" width="6" height="8" fill="#3a3a40"/>
<!-- man left -->
<circle cx="42" cy="53" r="9" fill="#2a2624"/><path d="M18 76q4-14 22-16l20 6 4 20-4 34H30l-6-12-6 2z" fill="#e9e9f0"/><path d="M38 62l24 4 6 20-4 34-28 4-6-20z" fill="#1e2438"/><path d="M28 112h34l2 50-8 4-8-36-4 44-10 2z" fill="#a8997a"/><path d="M34 176h10v5H33zM52 168l9-5 2 4-10 6z" fill="#8a8a88"/><circle cx="20" cy="109" r="3" fill="#e0c0a8"/>
<!-- right -->
<rect x="210" width="3.500" height="197" fill="#17171c"/><rect x="213.500" width="5" height="197" fill="#c6a37c"/><path d="M218.500 0h8v200h-8z" fill="#54453e"/>
<path d="M226 0h43v272l-43-76z" fill="#6e625c"/><path d="M226 0q6 14 0 28t0 28 0 28 0 28 0 28 0 28 0 28l-3 0V0z" fill="#3c322e"/>
<g stroke="#5c514b" stroke-width="2" opacity=".7"><path d="M228 30h41M228 58h41M228 86h41M228 114h41M228 142h41M228 170h41"/></g><g stroke="#82766f" stroke-width="2" opacity=".6"><path d="M228 16h41M228 44h41M228 72h41M228 100h41M228 128h41"/></g>
<path d="M212 196l57 78v6l-60-84z" fill="#5e5a58"/>
</svg>
<div class="abs" style="left:0;top:98px;width:840px;height:227px;background:linear-gradient(to bottom,rgba(0,0,0,0) 0,rgba(0,0,0,.02) 12%,rgba(0,0,0,.09) 24%,rgba(0,0,0,.22) 34%,rgba(0,0,0,.45) 46%,rgba(0,0,0,.66) 57%,rgba(0,0,0,.85) 72%,rgba(0,0,0,.96) 84%,#000 97%)"></div>
<svg class="abs" style="left:0;top:0" width="840" height="325" viewBox="744 328 840 325"><path d="M785 545v24l18.600-12z" fill="#fff"/>
<g fill="#fff"><path d="M1328 552.300h6.200l8.300-8.300v26l-8.300-8.300H1328z"/><path d="M1346.300 551.500a6.300 6.300 0 0 1 0 11z"/></g><path d="M1346.300 545.300a12 12 0 0 1 0 23.400" stroke="#fff" stroke-width="3" fill="none"/>
<path d="M1435.500 547h-7v7M1444.500 547h7v7M1435.500 567h-7v-7M1444.500 567h7v-7" stroke="#fff" stroke-width="3.300" fill="none"/>
<g fill="#fff"><circle cx="1536" cy="547" r="3.300"/><circle cx="1536" cy="557" r="3.300"/><circle cx="1536" cy="567" r="3.300"/></g>
<rect x="776" y="605" width="776" height="8" rx="4" fill="#626262"/><rect x="776" y="605" width="44" height="8" rx="4" fill="#b6b6b6"/></svg>
<div class="t" style="left:96px;top:215px;font-size:28px;color:#fff">0:00 / 0:54</div>
</div>

<!-- messages -->
<svg class="abs mav" style="top:690px" width="72" height="72"><use href="#bay" width="72" height="72"/></svg>
<div class="t un" style="top:695px">bayaraa</div><div class="t ts" style="left:869px;top:697px">11/06/2024</div>
<div class="t msg" style="top:742px">гоё юм байнаа</div>
<svg class="abs" style="left:743px;top:789px" width="30" height="30" viewBox="0 0 30 30"><g transform="rotate(-8 15 15)"><path d="M11.500 13.500c2-3 3.500-6 3.800-9.500.1-1.500 1-2.300 2.200-2 1.800.4 2.600 2.400 2.300 4.800-.2 1.800-.7 3.300-1.300 4.700h6.300c1.700 0 2.700 1.100 2.600 2.500 0 .9-.5 1.600-1.300 2 .8.500 1.200 1.300 1.100 2.200-.1 1-.7 1.700-1.600 2 .6.500.8 1.200.7 2-.2 1-.9 1.700-1.900 1.900.3.500.4 1 .3 1.600-.3 1.400-1.400 2.100-3 2.100h-5.500c-2 0-3.800-.6-5.200-1.700z" fill="#f7c744"/><path d="M18.500 11.500h6.300c1.700 0 2.700 1.100 2.600 2.500 0 .9-.5 1.600-1.300 2h-6.600M26.100 16c.8.500 1.200 1.300 1.100 2.200-.1 1-.7 1.700-1.600 2h-5.600M25.600 20.200c.6.500.8 1.200.7 2-.2 1-.9 1.700-1.900 1.900h-4.400" stroke="#e0a32e" stroke-width=".9" fill="none"/><path d="M2.500 17q0-3.500 4-4l5.500-.5v13l-5 1.200q-4.500.3-4.500-4z" fill="#f7c744"/></g></svg>
<svg class="abs" style="left:740px;top:863px" width="28" height="28"><use href="#bay" width="28" height="28"/></svg>
<div class="t" style="left:784px;top:865px;font-size:25.500px;font-weight:bold;letter-spacing:.45px">bayaraa</div><div class="t" style="left:900px;top:864px;font-size:26px;letter-spacing:.5px;-webkit-text-stroke:.3px">xaxa</div>
<svg class="abs mav" style="top:916px" width="72" height="72"><use href="#mun" width="72" height="72"/></svg>
<div class="t un" style="top:921px">munguu</div><div class="t ts" style="left:871px;top:923px">11/06/2024</div>
<div class="t msg" style="top:968px">hihi</div>
<div class="t" style="left:654px;top:1030px;font-size:22px;font-weight:bold;color:#8f8f99;letter-spacing:.4px">November 18, 2024</div>
<div class="abs" style="left:872px;top:1040px;width:1402px;height:2px;background:#c7c7d0"></div>
<svg class="abs mav" style="top:1074px" width="72" height="72"><use href="#bay" width="72" height="72"/></svg>
<div class="t un" style="top:1079px">bayaraa</div><div class="t ts" style="left:869px;top:1081px">Last Monday at 7:38 PM</div>
<div class="t msg" style="top:1126px">hi</div>
<div class="t msg" style="top:1176px">oroin mendee</div>
<svg class="abs mav" style="top:1246px" width="72" height="72"><use href="#mun" width="72" height="72"/></svg>
<div class="t un" style="top:1251px">munguu</div><div class="t ts" style="left:871px;top:1253px">Last Monday at 7:38 PM</div>
<div class="t msg" style="top:1298px">sainuu yutai bnda</div>
<!-- composer -->
<div class="abs" style="left:620px;top:1400px;width:1677px;height:96px;border-radius:24px;background:#efedf2"></div>
<svg class="abs" style="left:644px;top:1428px" width="40" height="40" viewBox="0 0 40 40"><circle cx="20" cy="20" r="20" fill="#1b1b21"/><path d="M10.500 20h19M20 10.500v19" stroke="#fff" stroke-width="4"/></svg>
<div class="t" style="left:708px;top:1436px;font-size:28px;letter-spacing:.96px;color:#9fa4ae;-webkit-text-stroke:.3px">@bayaraa хэрэглэгч рүү зурвас бичих</div>
<svg class="abs" style="left:2226px;top:1424px" width="48" height="48" viewBox="0 0 48 48"><circle cx="24" cy="24" r="24" fill="#3962d8"/><path d="M12.500 24h22M25 13.500L35.500 24 25 34.500" stroke="#f1effa" stroke-width="4.200" stroke-linecap="round" stroke-linejoin="round" fill="none"/></svg>


<div id="frameL" class="abs"></div>
<div id="frameR" class="abs"></div>
<div id="frameB" class="abs"></div>
</body>
</html>
